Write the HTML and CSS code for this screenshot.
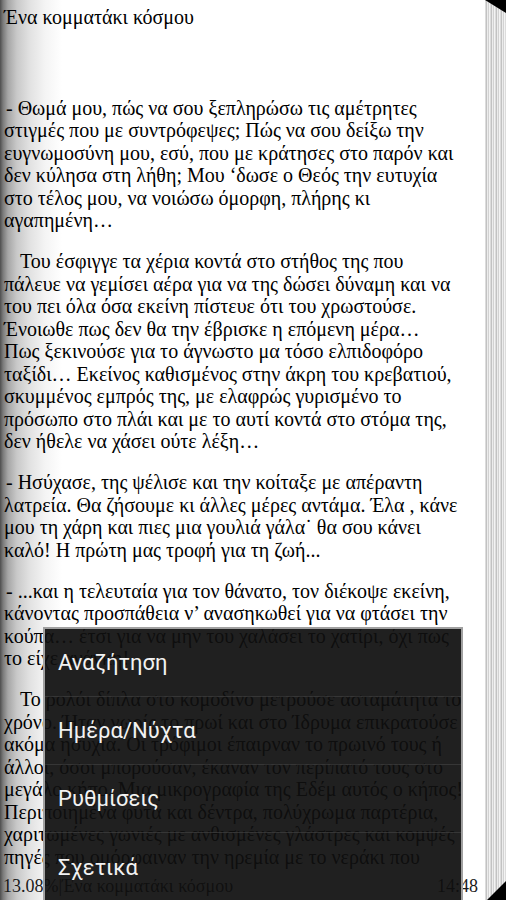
FILE: index.html
```html
<!DOCTYPE html>
<html lang="el">
<head>
<meta charset="utf-8">
<title>Ένα κομματάκι κόσμου</title>
<link rel="stylesheet" href="styles.css">
</head>
<body>
<div class="screen">
  <div class="page">
    <div class="text">
      <div class="title">Ένα κομματάκι κόσμου</div>
      <p class="dash">- Θωμά μου, πώς να σου ξεπληρώσω τις αμέτρητες<br>στιγμές που με συντρόφεψες; Πώς να σου δείξω την<br>ευγνωμοσύνη μου, εσύ, που με κράτησες στο παρόν και<br>δεν κύλησα στη λήθη; Μου ‘δωσε ο Θεός την ευτυχία<br>στο τέλος μου, να νοιώσω όμορφη, πλήρης κι<br>αγαπημένη…</p>
      <p class="indent">Του έσφιγγε τα χέρια κοντά στο στήθος της που<br>πάλευε να γεμίσει αέρα για να της δώσει δύναμη και να<br>του πει όλα όσα εκείνη πίστευε ότι του χρωστούσε.<br>Ένοιωθε πως δεν θα την έβρισκε η επόμενη μέρα…<br>Πως ξεκινούσε για το άγνωστο μα τόσο ελπιδοφόρο<br>ταξίδι… Εκείνος καθισμένος στην άκρη του κρεβατιού,<br>σκυμμένος εμπρός της, με ελαφρώς γυρισμένο το<br>πρόσωπο στο πλάι και με το αυτί κοντά στο στόμα της,<br>δεν ήθελε να χάσει ούτε λέξη…</p>
      <p class="dash">- Ησύχασε, της ψέλισε και την κοίταξε με απέραντη<br>λατρεία. Θα ζήσουμε κι άλλες μέρες αντάμα. Έλα , κάνε<br>μου τη χάρη και πιες μια γουλιά γάλα˙ θα σου κάνει<br>καλό! Η πρώτη μας τροφή για τη ζωή...</p>
      <p class="dash">- ...και η τελευταία για τον θάνατο, τον διέκοψε εκείνη,<br>κάνοντας προσπάθεια ν’ ανασηκωθεί για να φτάσει την<br>κούπα… έτσι για να μην του χαλάσει το χατίρι, όχι πως<br>το είχε ανάγκη!</p>
      <p class="indent">Το ρολόι δίπλα στο κομοδίνο μετρούσε ασταμάτητα το<br>χρόνο. Ήταν νωρίς το πρωί και στο Ίδρυμα επικρατούσε<br>ακόμα ησυχία. Οι τρόφιμοι έπαιρναν το πρωινό τους ή<br>άλλοι, όσοι μπορούσαν, έκαναν τον περίπατό τους στο<br>μεγάλο κήπο. Μια μικρογραφία της Εδέμ αυτός ο κήπος!<br>Περιποιημένα φυτά και δέντρα, πολύχρωμα παρτέρια,<br>χαριτωμένες γωνιές με ανθισμένες γλάστρες και κομψές<br>πηγές που ομόρφαιναν την ηρεμία με το νεράκι που</p>
    </div>
    <div class="footer">
      <span>13.08%|Ένα κομματάκι κόσμου</span>
      <span>14:48</span>
    </div>
  </div>
  <div class="edge"></div>
  <div class="corner corner-top"></div>
  <div class="corner corner-bottom"></div>

  <div class="menu">
    <div class="menu-item">Αναζήτηση</div>
    <div class="menu-item">Ημέρα/Νύχτα</div>
    <div class="menu-item">Ρυθμίσεις</div>
    <div class="menu-item">Σχετικά</div>
  </div>
</div>
</body>
</html>
```

FILE: styles.css
```css
html, body {
  margin: 0;
  padding: 0;
}

body {
  width: 506px;
  height: 900px;
  overflow: hidden;
  font-family: "Liberation Serif", "Times New Roman", serif;
  background: #000;
}

.screen {
  position: relative;
  display: flex;
  width: 506px;
  height: 900px;
}

.page {
  flex: 1;
  display: flex;
  flex-direction: column;
  min-width: 0;
  color: #000;
  background: linear-gradient(to right,
    #4e4e4e 0px,
    #7a7a7a 3px,
    #a6a6a6 8px,
    #c9c9c9 17px,
    #e2e2e2 30px,
    #f4f4f4 45px,
    #ffffff 62px);
}

.text {
  flex: 1;
  overflow: hidden;
  padding: 6px 0 0 4px;
  font-size: 20px;
  line-height: 22.5px;
}

.title {
  margin: 0 0 68px;
  white-space: nowrap;
}

.text p {
  margin: 0 0 18.5px;
  white-space: nowrap;
}

.text p.dash {
  text-indent: 2px;
}

.text p.indent {
  text-indent: 16px;
}

.footer {
  display: flex;
  justify-content: space-between;
  align-items: center;
  height: 24px;
  padding: 0 7px 2px 3px;
  font-size: 18px;
  line-height: 20px;
  color: #1a1a1a;
}

.edge {
  width: 21px;
  background: repeating-linear-gradient(to right,
    #dcdcdc 0px, #dcdcdc 1px,
    #c2c2c2 1px, #c2c2c2 2px,
    #ececec 2px, #ececec 3px,
    #d2d2d2 3px, #d2d2d2 4px,
    #f3f3f3 4px, #f3f3f3 5px);
}

.corner {
  position: absolute;
  right: 0;
  background: #000;
}

.corner-top {
  top: 0;
  width: 21px;
  height: 13px;
  clip-path: polygon(0 0, 100% 0, 100% 100%);
}

.corner-bottom {
  bottom: 0;
  width: 19px;
  height: 19px;
  clip-path: polygon(100% 0, 100% 100%, 0 100%);
}

.menu {
  position: absolute;
  left: 43px;
  top: 627px;
  width: 416px;
  bottom: 0;
  display: flex;
  flex-direction: column;
  border: 2px solid #a0a0a0;
  border-bottom: none;
  background: rgba(15, 15, 15, 0.93);
}

.menu-item {
  display: flex;
  align-items: center;
  height: 68px;
  flex: none;
  padding-left: 13px;
  font-family: Roboto, "Noto Sans", sans-serif;
  font-size: 22px;
  color: #f2f2f2;
  border-bottom: 1px solid rgba(70, 70, 70, 0.6);
  box-sizing: border-box;
}

.menu-item:last-child {
  border-bottom: none;
}
```
